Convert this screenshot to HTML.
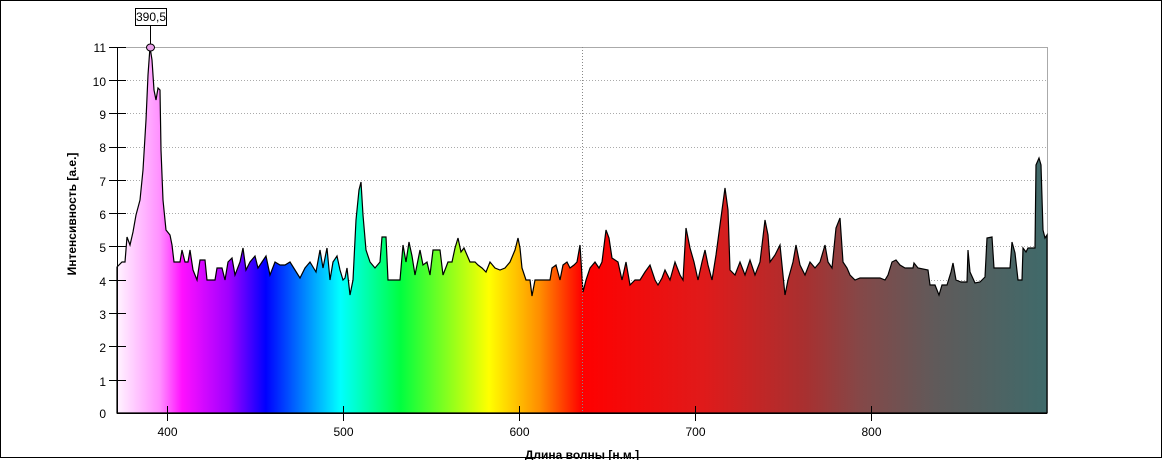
<!DOCTYPE html>
<html><head><meta charset="utf-8"><style>
html,body{margin:0;padding:0;background:#fff;width:1164px;height:460px;overflow:hidden}
svg{display:block}
text{font-family:"Liberation Sans",Arial,sans-serif;fill:#000}
</style></head><body>
<svg width="1164" height="460" viewBox="0 0 1164 460" xmlns="http://www.w3.org/2000/svg">
<defs>
<linearGradient id="g" gradientUnits="userSpaceOnUse" x1="117" y1="0" x2="1047" y2="0">
<stop offset="0" stop-color="#fff4ff"/>
<stop offset="0.046" stop-color="#ff90ff"/>
<stop offset="0.07" stop-color="#ff10ff"/>
<stop offset="0.12" stop-color="#a000ff"/>
<stop offset="0.16" stop-color="#0000ff"/>
<stop offset="0.24" stop-color="#00ffff"/>
<stop offset="0.305" stop-color="#00ff40"/>
<stop offset="0.40" stop-color="#ffff00"/>
<stop offset="0.455" stop-color="#ff8c00"/>
<stop offset="0.50" stop-color="#ff0000"/>
<stop offset="0.63" stop-color="#e01a1a"/>
<stop offset="0.74" stop-color="#a83030"/>
<stop offset="0.80" stop-color="#844848"/>
<stop offset="0.88" stop-color="#605a5a"/>
<stop offset="1" stop-color="#3f6a6a"/>
</linearGradient>
</defs>
<rect x="0.5" y="0.5" width="1161" height="457" fill="#fff" stroke="#000"/>
<!-- grid -->
<g stroke="#aaa" stroke-dasharray="1,2" stroke-width="1">
<line x1="118" y1="80.5" x2="1047" y2="80.5"/><line x1="118" y1="113.5" x2="1047" y2="113.5"/>
<line x1="118" y1="147.5" x2="1047" y2="147.5"/><line x1="118" y1="180.5" x2="1047" y2="180.5"/>
<line x1="118" y1="213.5" x2="1047" y2="213.5"/><line x1="118" y1="246.5" x2="1047" y2="246.5"/>
<line x1="118" y1="280.5" x2="1047" y2="280.5"/><line x1="118" y1="313.5" x2="1047" y2="313.5"/>
<line x1="118" y1="346.5" x2="1047" y2="346.5"/><line x1="118" y1="380.5" x2="1047" y2="380.5"/>
</g>
<polyline points="118,47.5 1047.5,47.5 1047.5,413" fill="none" stroke="#aaa"/>
<path fill="url(#g)" stroke="#000" stroke-width="1.2" d="M117,267 L122,262 125,262 127,237 130,245 133,232 136,215 140,200 143,170 146,120 148,75 150,47 152,60 154,90 156,100 158,88 160,90 161,150 163,200 166,230 170,235 172,245 174,262 180,262 182,250 185,262 188,262 190,250 193,270 197,280 200,260 205,260 207,280 215,280 217,268 222,268 225,280 228,262 232,258 235,275 240,262 243,248 246,270 250,262 255,256 258,268 262,262 266,256 270,275 275,262 280,265 285,265 290,262 295,270 300,278 305,268 310,262 316,272 320,250 323,268 327,248 330,280 333,262 337,256 340,270 343,280 345,278 347,268 350,295 353,280 356,220 359,190 361,182 363,215 366,250 370,262 375,268 380,262 382,237 386,237 388,280 395,280 400,280 403,245 406,262 409,242 412,256 415,275 420,250 423,265 427,262 430,275 433,250 440,250 443,275 448,262 452,262 455,248 458,238 461,252 464,248 470,262 475,262 478,265 482,268 486,272 490,262 495,268 500,270 505,268 510,262 515,250 518,238 520,248 522,268 526,280 530,280 532,296 535,280 545,280 550,280 552,268 556,265 560,280 563,265 567,262 570,268 574,265 577,262 580,245 583,292 586,280 590,268 595,262 599,268 602,262 606,230 609,238 612,258 618,262 622,280 626,262 630,285 635,280 640,280 645,272 650,265 655,280 658,285 662,278 665,270 670,280 675,262 680,275 683,280 686,228 690,248 694,262 698,280 702,262 705,250 708,265 712,280 716,255 720,225 725,188 728,210 730,270 735,275 740,262 745,275 750,260 755,275 760,262 765,220 768,235 770,262 775,255 780,245 785,295 788,280 793,262 796,245 800,265 805,275 810,262 815,268 820,262 825,245 828,262 832,268 836,228 840,218 843,262 847,268 850,275 855,280 860,278 870,278 880,278 885,280 888,275 892,262 896,260 900,265 905,268 913,268 914,263 918,268 928,270 930,285 935,285 939,295 942,285 947,285 951,272 953,263 956,280 961,282 967,282 968,250 970,272 975,283 980,282 985,277 987,238 992,237 994,268 1005,268 1010,268 1012,242 1015,253 1018,280 1022,280 1023,248 1026,252 1028,248 1035,248 1036,165 1039,158 1041,165 1043,230 1045,238 1047,235 1047,413 117,413 Z"/>
<line x1="582.5" y1="47" x2="582.5" y2="413" stroke="#888" stroke-dasharray="1,2"/>
<!-- axes -->
<line x1="117.5" y1="47" x2="117.5" y2="413.5" stroke="#000"/>
<line x1="117" y1="413.5" x2="1047" y2="413.5" stroke="#000"/>
<g stroke="#000">
<line x1="109" y1="47.5" x2="126" y2="47.5"/><line x1="109" y1="80.5" x2="126" y2="80.5"/>
<line x1="109" y1="113.5" x2="126" y2="113.5"/><line x1="109" y1="147.5" x2="126" y2="147.5"/>
<line x1="109" y1="180.5" x2="126" y2="180.5"/><line x1="109" y1="213.5" x2="126" y2="213.5"/>
<line x1="109" y1="246.5" x2="126" y2="246.5"/><line x1="109" y1="280.5" x2="126" y2="280.5"/>
<line x1="109" y1="313.5" x2="126" y2="313.5"/><line x1="109" y1="346.5" x2="126" y2="346.5"/>
<line x1="109" y1="380.5" x2="126" y2="380.5"/>
<line x1="167.5" y1="406" x2="167.5" y2="421"/><line x1="343.5" y1="406" x2="343.5" y2="421"/>
<line x1="519.5" y1="406" x2="519.5" y2="421"/><line x1="695.5" y1="406" x2="695.5" y2="421"/>
<line x1="871.5" y1="406" x2="871.5" y2="421"/>
</g>
<g font-size="12" text-anchor="end">
<text x="106" y="52">11</text><text x="106" y="86">10</text><text x="106" y="119">9</text>
<text x="106" y="152">8</text><text x="106" y="186">7</text><text x="106" y="219">6</text>
<text x="106" y="252">5</text><text x="106" y="286">4</text><text x="106" y="319">3</text>
<text x="106" y="352">2</text><text x="106" y="386">1</text><text x="106" y="418">0</text>
</g>
<g font-size="12" text-anchor="middle">
<text x="167.5" y="436">400</text><text x="343.5" y="436">500</text><text x="519.5" y="436">600</text>
<text x="695.5" y="436">700</text><text x="871.5" y="436">800</text>
</g>
<text x="582" y="459" font-size="12" font-weight="bold" text-anchor="middle">Длина волны [н.м.]</text>
<text transform="translate(76,214) rotate(-90)" font-size="12" font-weight="bold" text-anchor="middle">Интенсивность [а.е.]</text>
<!-- marker -->
<line x1="150.5" y1="25" x2="150.5" y2="47" stroke="#000"/>
<rect x="135.5" y="8.5" width="31" height="17" fill="#fff" stroke="#000"/>
<text x="151" y="21" font-size="12" text-anchor="middle">390,5</text>
<ellipse cx="150.5" cy="47.5" rx="4" ry="3.5" fill="#e9a0e9" stroke="#000"/>
</svg>
</body></html>
